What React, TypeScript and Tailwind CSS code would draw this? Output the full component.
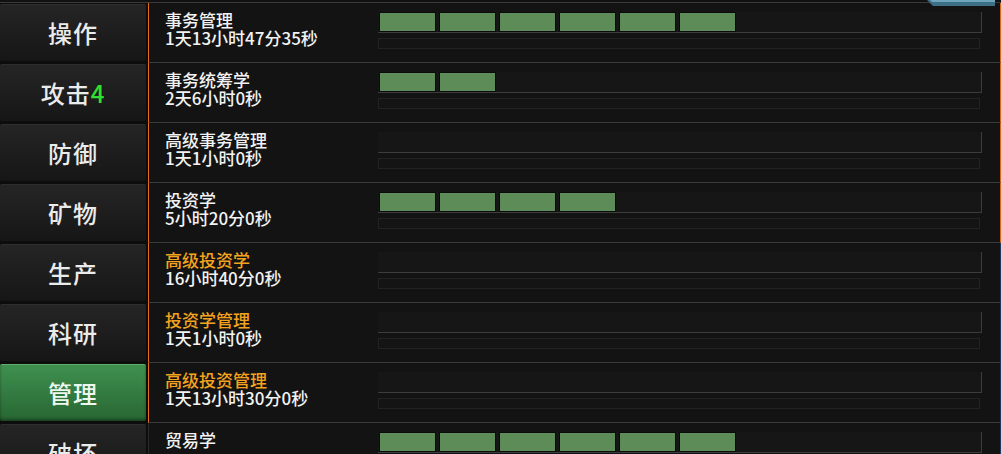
import React from "react";

const tabs = [
  { label: "操作" },
  { label: "攻击", badge: "4" },
  { label: "防御" },
  { label: "矿物" },
  { label: "生产" },
  { label: "科研" },
  { label: "管理", active: true },
  { label: "破坏" },
];

const techs = [
  { name: "事务管理", time: "1天13小时47分35秒", level: 6 },
  { name: "事务统筹学", time: "2天6小时0秒", level: 2 },
  { name: "高级事务管理", time: "1天1小时0秒", level: 0 },
  { name: "投资学", time: "5小时20分0秒", level: 4 },
  { name: "高级投资学", time: "16小时40分0秒", level: 0, locked: true },
  { name: "投资学管理", time: "1天1小时0秒", level: 0, locked: true },
  { name: "高级投资管理", time: "1天13小时30分0秒", level: 0, locked: true },
  { name: "贸易学", time: "", level: 6 },
];

function SideTab({ label, badge, active }: { label: string; badge?: string; active?: boolean }) {
  return (
    <div
      className={
        active
          ? "h-[57px] shrink-0 flex items-center justify-center rounded-[2px] border-t border-[#5fae6a] bg-gradient-to-b from-[#3f9150] to-[#276632] text-[#eef7ee] shadow-[inset_0_-2px_3px_rgba(0,0,0,0.35)]"
          : "h-[57px] shrink-0 flex items-center justify-center rounded-[2px] border-t border-[#2e2e2e] bg-gradient-to-b from-[#252525] to-[#161616] text-[#ebebeb]"
      }
    >
      <span className="text-[24px] font-medium leading-none tracking-[1px]">
        {label}
        {badge && <span className="text-[#2fe02f]">{badge}</span>}
      </span>
    </div>
  );
}

function LevelBar({ level }: { level: number }) {
  return (
    <div className="flex-1 flex flex-col pt-[9px]">
      <div className="h-[21px] flex gap-[5px] px-[2px] pt-[1px] bg-[#161616] border-b border-r border-[#3c3c3c]">
        {Array.from({ length: level }).map((_, i) => (
          <div key={i} className="w-[55px] h-[18px] bg-[#5e8c59] outline outline-1 outline-[#0b0b0b]" />
        ))}
      </div>
      <div className="mt-[5px] mr-[2px] h-[11px] bg-[#141414] border border-[#222]" />
    </div>
  );
}

export default function App() {
  return (
    <div
      className="w-[1001px] h-[454px] overflow-hidden bg-[#0d0d0d] flex flex-col"
      style={{ fontFamily: '"Noto Sans CJK SC", "Noto Sans", sans-serif' }}
    >
      <div className="relative h-[3px] shrink-0 bg-[#111] border-b border-[#3a3a3a]">
        <svg className="absolute right-[6px] top-0" width="68" height="7" viewBox="0 0 68 7">
          <polygon points="0,0 68,0 68,6 6,6" fill="#3d6f86" />
          <polygon points="3,0 68,0 68,2 5,2" fill="#6fa6bd" />
        </svg>
      </div>
      <div className="flex flex-1 min-h-0">
        <div className="w-[146px] mr-[2px] shrink-0 flex flex-col gap-[3px] pt-[1px]">
          {tabs.map((t) => (
            <SideTab key={t.label} {...t} />
          ))}
        </div>
        <div className="flex-1 flex flex-col bg-[#131313]">
          {techs.map((t, i) => (
            <div
              key={t.name}
              className={`h-[60px] shrink-0 flex border-b border-[#3a3a3a] border-l border-r ${
                i < 7 ? "border-l-[#e0701f]" : "border-l-[#2a2a2a]"
              } ${i < 4 ? "border-r-[#d56a1e]" : "border-r-[#22385e]"}`}
            >
              <div className="w-[229px] shrink-0 pl-[16px] pt-[8px] text-[17px] leading-[18px] font-medium">
                <div className={t.locked ? "text-[#f4a31f]" : "text-[#f2f2f2]"}>{t.name}</div>
                <div className="text-[#f2f2f2]">{t.time}</div>
              </div>
              <LevelBar level={t.level} />
              <div className="w-[18px] shrink-0" />
            </div>
          ))}
        </div>
      </div>
    </div>
  );
}
